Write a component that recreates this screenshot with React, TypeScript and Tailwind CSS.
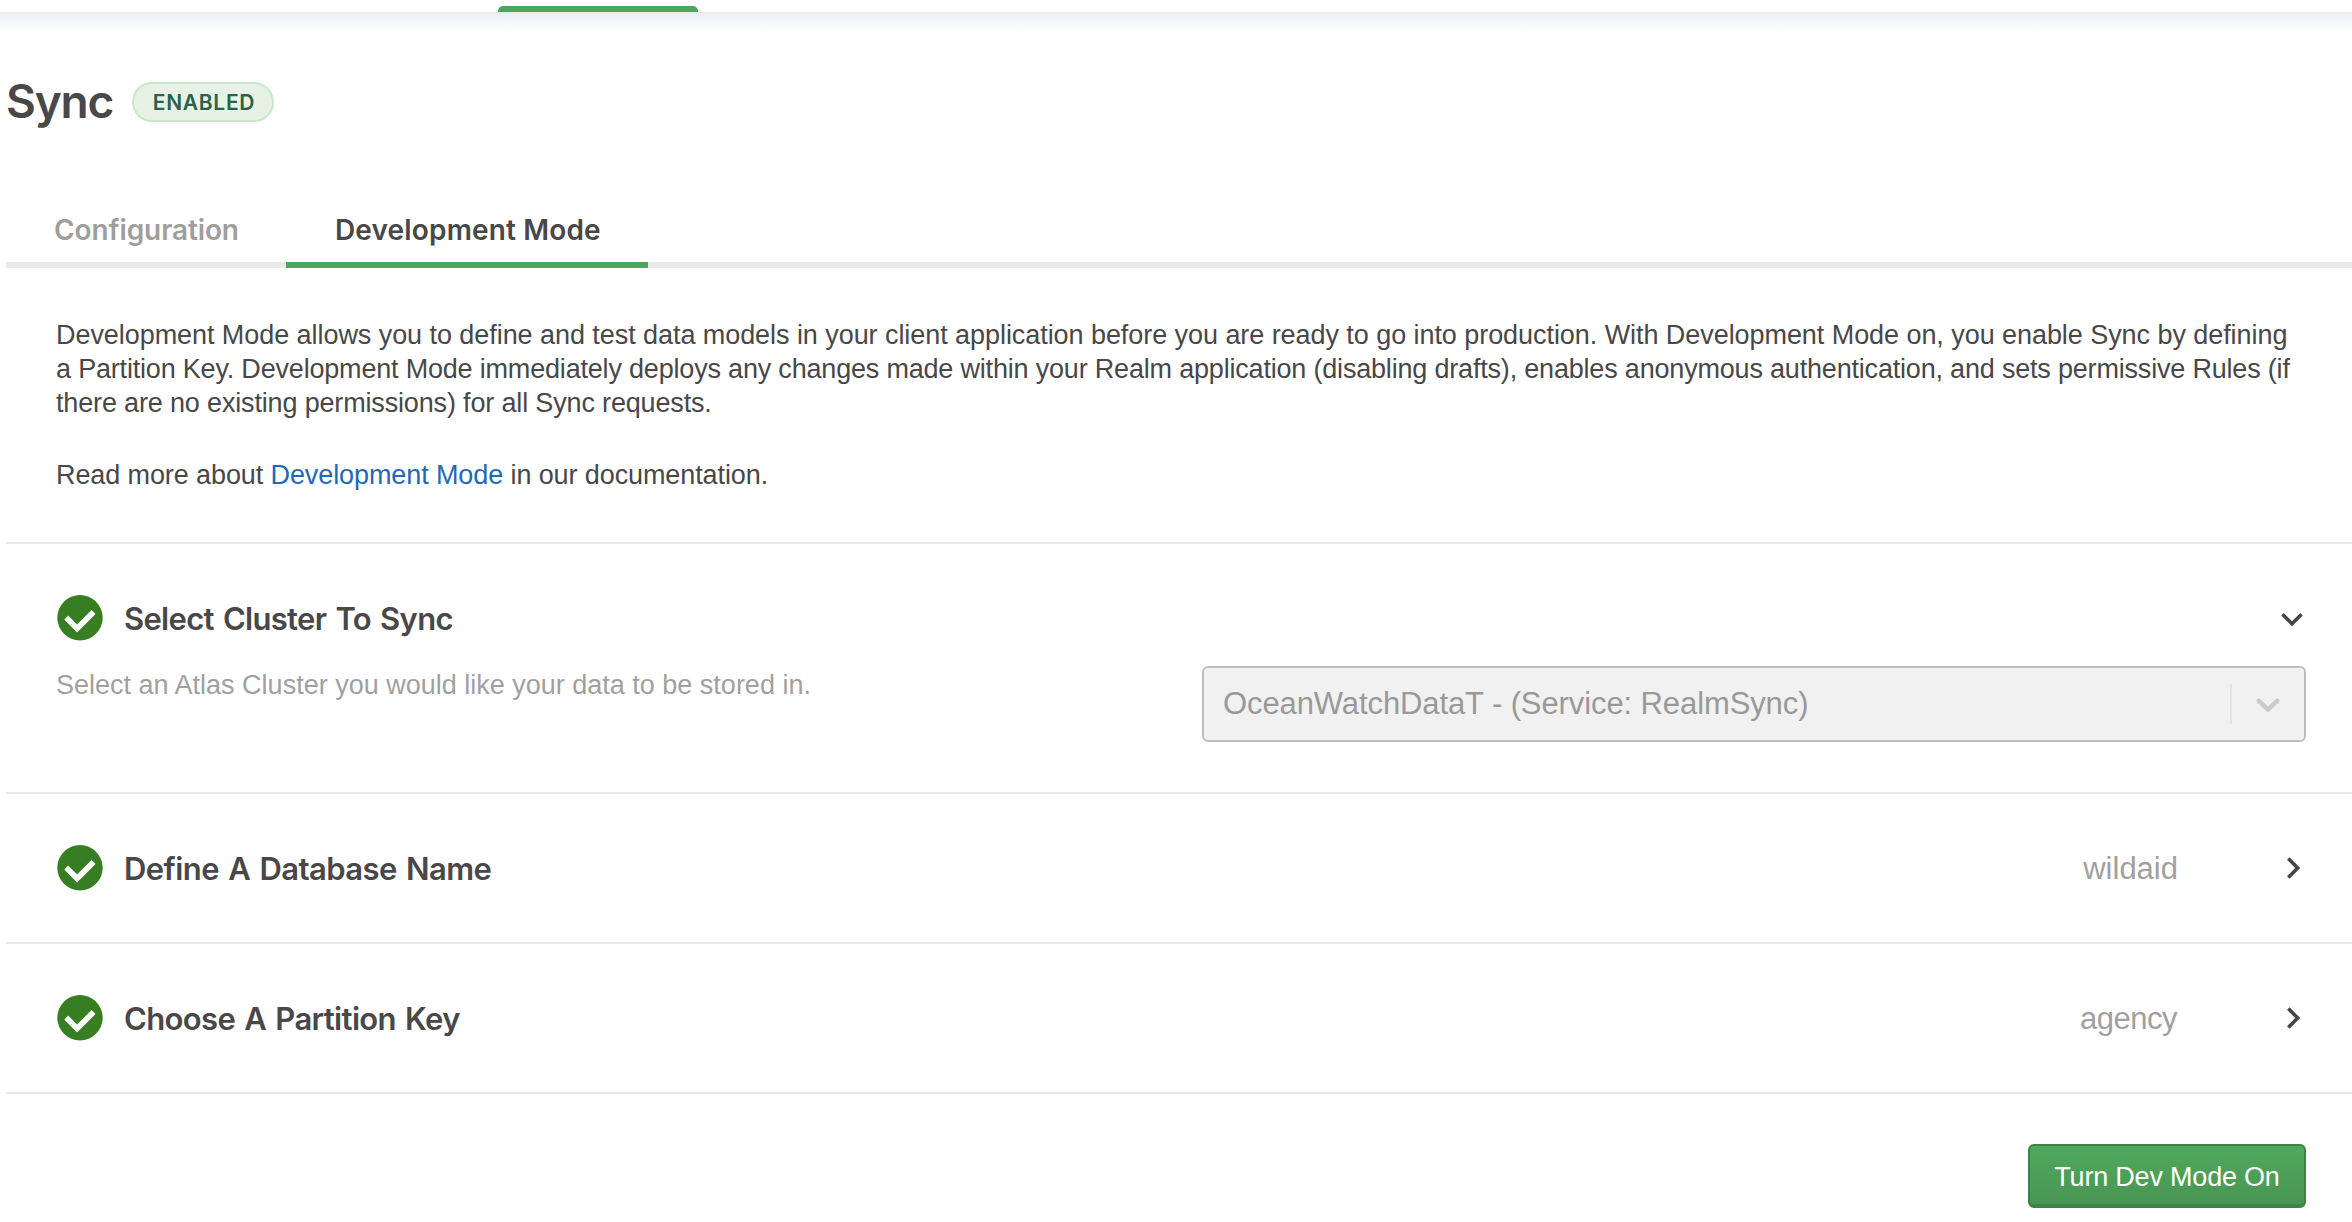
import type { ReactNode } from "react";

function CheckBadge() {
  return (
    <svg className="h-[46px] w-[46px] shrink-0" viewBox="0 0 46 46" fill="none">
      <circle cx="23" cy="22.8" r="22.7" fill="#377e22" />
      <path d="M9.2 22.6 L20.1 33.5 L36.6 17" stroke="#fff" strokeWidth="5.6" />
    </svg>
  );
}

function Chevron({ open }: { open?: boolean }) {
  return (
    <svg className="h-[26px] w-[26px] shrink-0" viewBox="0 0 26 26" fill="none" stroke="#464646" strokeWidth="3.6">
      <path d={open ? "M3.5 9.3 L13 18.7 L22.5 9.3" : "M9.3 3.5 L18.7 13 L9.3 22.5"} />
    </svg>
  );
}

function StepHeader({ title, tracking, children }: { title: string; tracking: string; children: ReactNode }) {
  return (
    <>
      <CheckBadge />
      <h2 className={`ml-[21px] pt-[3px] font-['Inter',sans-serif] text-[31px] font-semibold [word-spacing:2px] ${tracking}`}>{title}</h2>
      <div className="ml-auto flex items-center text-[31px] text-[#a1a09f]">{children}</div>
    </>
  );
}

export default function App() {
  return (
    <div className="h-[1222px] w-[2352px] overflow-hidden bg-white font-['Liberation_Sans',sans-serif] whitespace-nowrap text-[#494747]">
      <header className="h-3 pt-1.5">
        <div className="ml-[498px] h-1.5 w-[200px] rounded-t-[5px] bg-[#4ea65c]" />
      </header>
      <div className="h-5 border-t-2 border-[#e6edf0] bg-linear-to-b from-[#ebeff6] via-[#f7f8fc] to-[#fefefe]" />

      <main className="ml-1.5">
        <div className="mt-10 flex h-[60px] items-center">
          <h1 className="-mt-0.5 w-[126px] font-['Inter',sans-serif] text-[46px] leading-[60px] font-semibold tracking-[-1.2px]">Sync</h1>
          <span className="flex h-10 w-[142px] items-center justify-center rounded-full border-2 border-[#c9e7ca] bg-[#e7f2e5] pl-0.5 font-['Inter',sans-serif] text-[21px] leading-none font-semibold tracking-[0.7px] text-[#2b6148]">
            ENABLED
          </span>
        </div>

        <nav className="mt-16 flex h-[72px] font-['Inter',sans-serif] text-[28px] font-semibold">
          <div className="flex w-[280px] items-center border-b-[6px] border-[#e9e9ea] pt-0.5 pl-12 tracking-[-0.1px] text-[#9f9e9c]">Configuration</div>
          <div className="flex w-[362px] items-center border-b-[6px] border-[#4ea65c] pt-0.5 pl-[49px] tracking-[0.15px]">Development Mode</div>
          <div className="grow border-b-[6px] border-[#e9e9ea]" />
        </nav>

        <section className="h-[276px] border-b-2 border-[#e9e9e9] pt-[50px] pl-[50px] text-[27px] leading-[34px]">
          <p>
            <span className="block tracking-[-0.06px]">
              Development Mode allows you to define and test data models in your client application before you are ready to go into production. With Development Mode on, you enable Sync by defining
            </span>
            <span className="block tracking-[-0.19px]">
              a Partition Key. Development Mode immediately deploys any changes made within your Realm application (disabling drafts), enables anonymous authentication, and sets permissive Rules (if
            </span>
            <span className="block tracking-[-0.16px]">there are no existing permissions) for all Sync requests.</span>
          </p>
          <p className="mt-[38px] tracking-[-0.1px]">
            Read more about <a className="text-[#1e69b8]">Development Mode</a> in our documentation.
          </p>
        </section>

        <section className="h-[250px] border-b-2 border-[#e9e9e9] pt-8 pl-[51px]">
          <div className="flex h-[84px] items-center pr-[47px]">
            <StepHeader title="Select Cluster To Sync" tracking="tracking-[-0.69px]">
              <Chevron open />
            </StepHeader>
          </div>
          <div className="mt-1.5 flex justify-between pr-[46px]">
            <p className="-ml-px pt-0.5 text-[27px] leading-[34px] text-[#a1a09f]">Select an Atlas Cluster you would like your data to be stored in.</p>
            <div className="flex h-[76px] w-[1104px] items-center rounded-[6px] border-2 border-[#bdbdbd] bg-[#f1f1f1] pl-[19px]">
              <span className="grow pt-px text-[31px] tracking-[-0.1px] text-[#999998]">OceanWatchDataT - (Service: RealmSync)</span>
              <span className="h-10 w-0.5 bg-[#e3e3e3]" />
              <svg className="mx-4 h-10 w-10" viewBox="0 0 20 20" fill="#cccccc">
                <path d="M4.516 7.548c0.436-0.446 1.043-0.481 1.576 0l3.908 3.747 3.908-3.747c0.533-0.481 1.141-0.446 1.574 0 0.436 0.445 0.408 1.197 0 1.615-0.406 0.418-4.695 4.502-4.695 4.502-0.217 0.223-0.502 0.335-0.787 0.335s-0.57-0.112-0.789-0.335c0 0-4.287-4.084-4.695-4.502s-0.436-1.17 0-1.615z" />
              </svg>
            </div>
          </div>
        </section>

        <section className="flex h-[150px] items-center border-b-2 border-[#e9e9e9] pr-[47px] pl-[51px]">
          <StepHeader title="Define A Database Name" tracking="tracking-[-0.57px]">
            <span className="mr-[101px] pt-[3px]">wildaid</span>
            <Chevron />
          </StepHeader>
        </section>

        <section className="flex h-[150px] items-center border-b-2 border-[#e9e9e9] pr-[47px] pl-[51px]">
          <StepHeader title="Choose A Partition Key" tracking="tracking-[-0.64px]">
            <span className="mr-[102px] pt-[3px] tracking-[-0.5px]">agency</span>
            <Chevron />
          </StepHeader>
        </section>

        <div className="flex justify-end pt-[50px] pr-[46px]">
          <button className="h-16 w-[278px] rounded-[6px] border-2 border-[#3e8449] bg-linear-to-b from-[#50a95e] to-[#489552] pt-0.5 text-[27px] leading-[34px] tracking-[-0.2px] text-white shadow-[inset_0_-2px_0_#3e8449]">
            Turn Dev Mode On
          </button>
        </div>
      </main>
    </div>
  );
}
